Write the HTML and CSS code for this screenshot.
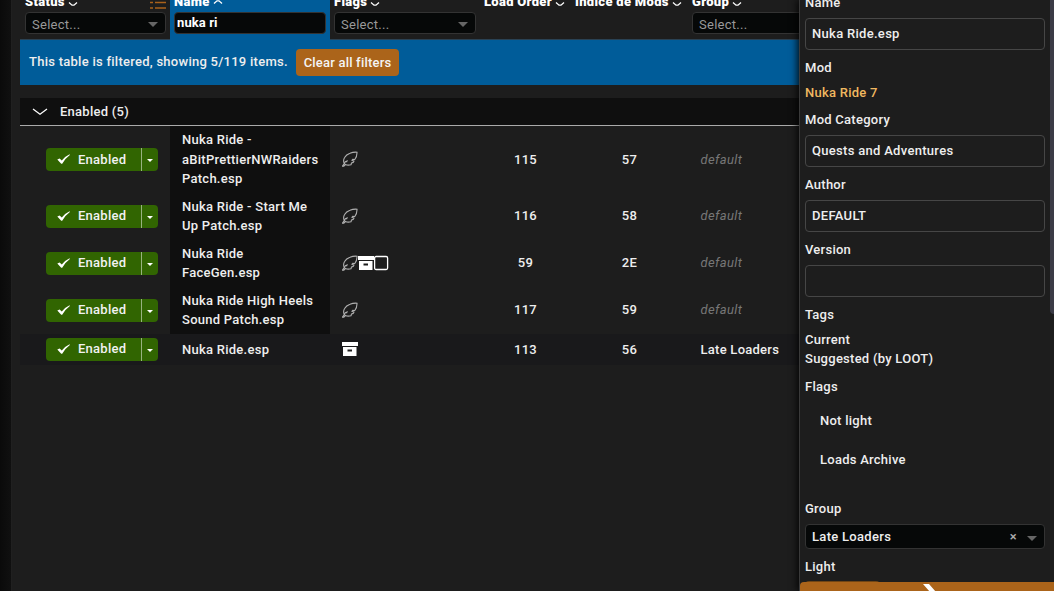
FILE: index.html
```html
<!DOCTYPE html>
<html lang="en">
<head>
<meta charset="utf-8">
<title>Plugins</title>
<link rel="stylesheet" href="styles.css">
</head>
<body>
<svg class="defs" width="0" height="0">
  <symbol id="check" viewBox="0 0 13 10"><path d="M0.3 5.6 L2.6 4.4 L4.8 6.6 Q8 2.2 12.6 0.2 L12.9 0.9 Q8.6 3.8 5.2 9.8 L4.2 9.8 Z" fill="#fff"/></symbol>
  <symbol id="feather" viewBox="0 0 16 16"><path d="M0.300 15.200 L2.300 12.600 Q0.800 9.500 2.600 6.500 Q4.200 3.500 8 2.200 Q11 1 15 1.200 Q15.200 5.500 12.800 8.500 L10.800 8.300 L10 9.200 L12 10 Q11.500 11.800 9.500 12 L9 13.700 Q6 14.700 3.400 13.500 L1.800 15.200 Z M2.400 12.800 L3.400 10.600 L5 9.900 L4.500 11.300" fill="none" stroke="#b0b0b0" stroke-width="1.100"/></symbol>
  <symbol id="archive" viewBox="0 0 16 16"><path d="M0 1h16v4H0z M1 6h13.5v9H1z" fill="#fff"/><path d="M5.5 8.5h4.5v2H5.500z" fill="#1d1d1d"/></symbol>
  <symbol id="square" viewBox="0 0 16 16"><rect x="0.600" y="1.500" width="13" height="13" rx="1.500" fill="none" stroke="#fff" stroke-width="1.300"/></symbol>
  <symbol id="sort" viewBox="0 0 10 6"><path d="M1 1.500 L4 4.200 H6 L9 1.500" fill="none" stroke="#fff" stroke-width="1.300"/></symbol>
</svg>
<div class="app">
  <div class="rail"></div>
  <main class="main">
    <div class="thead cols">
      <div class="th"><div class="title">Status <svg class="sort"><use href="#sort"/></svg>
        <svg class="list" width="16" height="14" viewBox="0 0 16 14"><path d="M0 1.500h3M5 1.500h11M0 6.500h3M5 6.500h11M0 12h3M5 12h11" stroke="#a9611b" stroke-width="1.500"/></svg></div>
        <div class="select">Select...<i class="tri"></i></div></div>
      <div class="th active"><div class="title">Name <svg class="sort up"><use href="#sort"/></svg></div><div class="select typed">nuka ri</div></div>
      <div class="th"><div class="title">Flags <svg class="sort"><use href="#sort"/></svg></div><div class="select">Select...<i class="tri"></i></div></div>
      <div class="th"><div class="title">Load Order <svg class="sort"><use href="#sort"/></svg></div></div>
      <div class="th"><div class="title">Indice de Mods <svg class="sort"><use href="#sort"/></svg></div></div>
      <div class="th"><div class="title">Group <svg class="sort"><use href="#sort"/></svg></div><div class="select">Select...</div></div>
    </div>
    <div class="banner"><span>This table is filtered, showing 5/119 items.</span><button class="clear">Clear all filters</button></div>
    <div class="group"><svg width="16" height="8" viewBox="0 0 16 8"><path d="M1 1 L8 6.300 L15 1" fill="none" stroke="#fff" stroke-width="1.200"/></svg>Enabled (5)</div>
    <div class="row cols">
      <div class="status"><div class="btn"><svg class="check"><use href="#check"/></svg>Enabled<span class="caret"></span></div></div>
      <div class="name">Nuka Ride - aBitPrettierNWRaiders Patch.esp</div>
      <div class="flags"><svg><use href="#feather"/></svg></div><div class="num">115</div><div class="num">57</div><div class="grp default">default</div>
    </div>
    <div class="row cols">
      <div class="status"><div class="btn"><svg class="check"><use href="#check"/></svg>Enabled<span class="caret"></span></div></div>
      <div class="name">Nuka Ride - Start Me Up Patch.esp</div>
      <div class="flags"><svg><use href="#feather"/></svg></div><div class="num">116</div><div class="num">58</div><div class="grp default">default</div>
    </div>
    <div class="row cols">
      <div class="status"><div class="btn"><svg class="check"><use href="#check"/></svg>Enabled<span class="caret"></span></div></div>
      <div class="name">Nuka Ride FaceGen.esp</div>
      <div class="flags"><svg><use href="#feather"/></svg><svg><use href="#archive"/></svg><svg><use href="#square"/></svg></div><div class="num">59</div><div class="num">2E</div><div class="grp default">default</div>
    </div>
    <div class="row cols">
      <div class="status"><div class="btn"><svg class="check"><use href="#check"/></svg>Enabled<span class="caret"></span></div></div>
      <div class="name">Nuka Ride High Heels Sound Patch.esp</div>
      <div class="flags"><svg><use href="#feather"/></svg></div><div class="num">117</div><div class="num">59</div><div class="grp default">default</div>
    </div>
    <div class="row cols selected">
      <div class="status"><div class="btn"><svg class="check"><use href="#check"/></svg>Enabled<span class="caret"></span></div></div>
      <div class="name">Nuka Ride.esp</div>
      <div class="flags"><svg><use href="#archive"/></svg></div><div class="num">113</div><div class="num">56</div><div class="grp">Late Loaders</div>
    </div>
  </main>
  <aside class="detail">
    <div class="fields">
      <div class="label">Name</div>
      <div class="input">Nuka Ride.esp</div>
      <div class="label">Mod</div>
      <div class="link">Nuka Ride 7</div>
      <div class="label">Mod Category</div>
      <div class="input">Quests and Adventures</div>
      <div class="label">Author</div>
      <div class="input">DEFAULT</div>
      <div class="label">Version</div>
      <div class="input"></div>
      <div class="label">Tags</div>
      <div class="tags"><div>Current</div><div>Suggested (by LOOT)</div></div>
      <div class="label">Flags</div>
      <div class="flaglist"><div>Not light</div><div>Loads Archive</div></div>
      <div class="label">Group</div>
      <div class="combo">Late Loaders<span class="x">×</span><i class="tri"></i></div>
      <div class="label">Light</div>
      <div class="lightbtn"></div>
    </div>
    <div class="scrollbar"></div>
    <div class="toggle"><svg width="16" height="16" viewBox="0 0 16 16"><path d="M0 0h6l7 8-7 8H0l7-8z" fill="#fff"/></svg></div>
  </aside>
</div>
</body>
</html>
```
FILE: styles.css
```css
* { box-sizing: border-box; }
body { margin: 0; background: #1d1d1d; color: #eee; font: 500 13px/19.5px Roboto, sans-serif; letter-spacing: .26px; overflow: hidden; }
.defs { display: none; }
.app { display: flex; height: 591px; overflow: hidden; }
.rail { width: 11px; background: linear-gradient(90deg, #0a0a0a, #101010); }
.main { width: 788px; padding-left: 8px; overflow: hidden; border-left: 1px solid #202020; }
.cols { display: grid; grid-template-columns: 150px 160px 150px 91px 117px 160px; width: 828px; }
.thead { height: 49px; margin-top: -9px; }
.th { padding: 0 4px; }
.th:first-child { padding-left: 5px; }
.active { background: #005c99; }
.title { display: flex; align-items: center; gap: 3px; height: 21px; color: #fff; font-weight: 900; letter-spacing: .3px; white-space: nowrap; }
.sort { width: 10px; height: 6px; margin-top: 5px; }
.up { transform: rotate(180deg); margin-top: 0; }
.list { margin-left: auto; margin-top: 3px; }
.select { display: flex; align-items: center; height: 22px; border: 1px solid #333; border-radius: 4px; background: #060808; color: #999; padding: 3px 7px 0 6px; font-weight: 400; }
.typed { color: #fff; font-weight: 700; padding: 0 2px; letter-spacing: .1px; }
.tri { margin-left: auto; border: 5px solid transparent; border-top-color: #666; border-bottom: 0; }
.banner { display: flex; align-items: flex-start; height: 46px; margin-top: -1px; padding: 9px; gap: 8px; background: #005c99; border-top: 1px solid #2a4254; }
.banner span { width: 259px; margin-top: 3px; white-space: nowrap; }
.clear { width: 103px; height: 27px; border: 0; border-radius: 4px; background: #ab641a; color: #f4f4f4; font: inherit; letter-spacing: .2px; padding: 0; white-space: nowrap; }
.group { display: flex; align-items: center; gap: 12px; height: 28px; margin-top: 13px; padding-left: 12px; background: #0f0f0f; border-bottom: 1px solid #aaa; }
.row > div { display: flex; align-items: center; }
.status { padding: 4px 0 4px 26px; }
.btn { display: flex; align-items: center; width: 112px; height: 23px; background: #316501; border-radius: 4px; padding-left: 11px; color: #f2f2f2; }
.check { width: 13px; height: 10px; margin-right: 8px; }
.caret { width: 17px; height: 23px; margin-left: auto; border-left: 1px solid #98b280; display: flex; align-items: center; justify-content: center; }
.caret::after { content: ""; border: 3px solid transparent; border-top-color: #fff; border-bottom: 0; margin-top: 2px; }
.name { padding: 4px 8px 4px 12px; background: #0f0f0f; }
.flags { padding-left: 12px; }
.flags svg { width: 16px; height: 16px; }
.row .num { justify-content: center; }
.grp { padding-left: 12.5px; white-space: nowrap; }
.default { color: #777; font-style: italic; font-weight: 400; letter-spacing: .35px; }
.selected, .selected .name { background: #19191b; }
.selected .name { padding-top: 5px; }
.selected .num, .selected .grp { padding-top: 1px; }
.detail { position: relative; width: 255px; background: #1d1d1d; border-left: 1px solid #3a3a3a; box-shadow: -2px 0 7px rgba(0,0,0,.8); }
.fields { margin-top: -7px; padding: 0 9px 0 5px; }
.label { height: 20px; }
.input { height: 32px; margin: 5px 0 8px; border: 1px solid #464646; border-radius: 4px; padding: 5px 6px; letter-spacing: .3px; }
.link { height: 20px; color: #f0b860; margin: 5px 0 7px; }
.tags { margin: 5px 0 8px; line-height: 19px; padding-bottom: 1px; }
.flaglist { padding-left: 15px; margin: 14px 0 30px; display: grid; gap: 19px; }
.combo { display: flex; align-items: center; height: 25px; margin: 5px 0 8px; padding: 0 7px 0 6px; border: 1px solid #333; border-radius: 4px; background: #060808; letter-spacing: .3px; }
.x { margin-left: auto; margin-right: 10px; color: #aaa; }
.combo .tri { margin-left: 0; margin-top: 3px; }
.lightbtn { width: 75px; height: 15px; margin-top: 4px; background: #704514; border-radius: 4px; }
.scrollbar { position: absolute; right: 0; top: 0; width: 4px; height: 314px; background: #3b3b46; border-bottom-left-radius: 4px; }
.toggle { position: absolute; left: 0; right: 0; top: 582px; height: 24px; background: #ab641a; border-top-left-radius: 4px; display: flex; justify-content: center; padding: 2px 0 0 7px; }
```
